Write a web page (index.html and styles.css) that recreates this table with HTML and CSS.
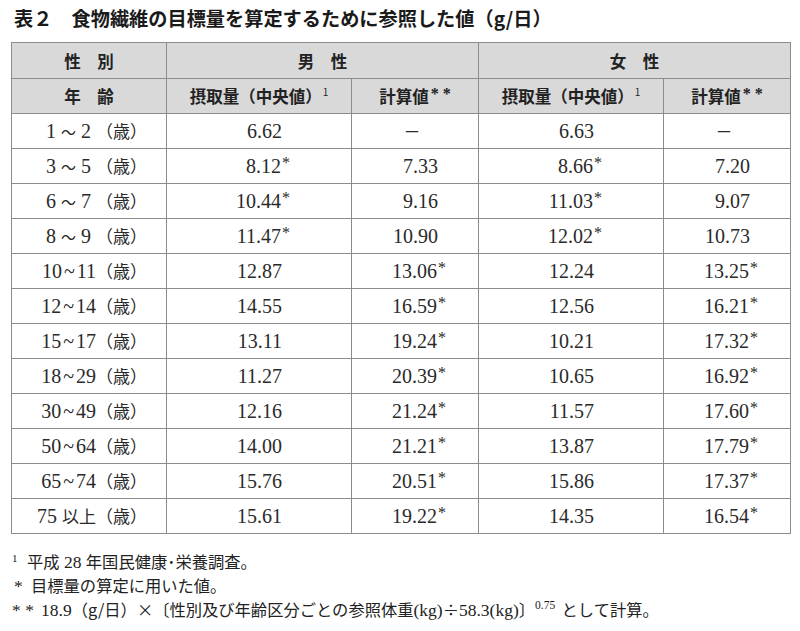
FILE: index.html
```html
<!DOCTYPE html>
<html lang="ja">
<head>
<meta charset="utf-8">
<link rel="stylesheet" href="styles.css">
</head>
<body>
<h1 class="title">表２　食物繊維の目標量を算定するために参照した値（g/日）</h1>
<table class="tbl">
  <colgroup>
    <col class="c-age"><col class="c-wide"><col class="c-narrow"><col class="c-wide"><col class="c-narrow">
  </colgroup>
  <thead>
    <tr class="hr1"><th>性　別</th><th colspan="2">男　性</th><th colspan="2">女　性</th></tr>
    <tr class="hr2"><th>年　齢</th><th>摂取量（中央値）<sup class="hs">1</sup></th><th>計算値<sup class="hs ha">* *</sup></th><th>摂取量（中央値）<sup class="hs">1</sup></th><th>計算値<sup class="hs ha">* *</sup></th></tr>
  </thead>
  <tbody>
    <tr><td class="age">1 <span class="w">～</span> 2 <span class="j">（歳）</span></td><td class="v vw">6.62</td><td class="v dash">－</td><td class="v vw">6.63</td><td class="v dash">－</td></tr>
    <tr><td class="age">3 <span class="w">～</span> 5 <span class="j">（歳）</span></td><td class="v vw">8.12<span class="ast">*</span></td><td class="v vn">7.33</td><td class="v vw">8.66<span class="ast">*</span></td><td class="v vn">7.20</td></tr>
    <tr><td class="age">6 <span class="w">～</span> 7 <span class="j">（歳）</span></td><td class="v vw">10.44<span class="ast">*</span></td><td class="v vn">9.16</td><td class="v vw">11.03<span class="ast">*</span></td><td class="v vn">9.07</td></tr>
    <tr><td class="age">8 <span class="w">～</span> 9 <span class="j">（歳）</span></td><td class="v vw">11.47<span class="ast">*</span></td><td class="v vn">10.90</td><td class="v vw">12.02<span class="ast">*</span></td><td class="v vn">10.73</td></tr>
    <tr><td class="age">10<span class="t">~</span>11<span class="j">（歳）</span></td><td class="v vw">12.87</td><td class="v vn">13.06<span class="ast">*</span></td><td class="v vw">12.24</td><td class="v vn">13.25<span class="ast">*</span></td></tr>
    <tr><td class="age">12<span class="t">~</span>14<span class="j">（歳）</span></td><td class="v vw">14.55</td><td class="v vn">16.59<span class="ast">*</span></td><td class="v vw">12.56</td><td class="v vn">16.21<span class="ast">*</span></td></tr>
    <tr><td class="age">15<span class="t">~</span>17<span class="j">（歳）</span></td><td class="v vw">13.11</td><td class="v vn">19.24<span class="ast">*</span></td><td class="v vw">10.21</td><td class="v vn">17.32<span class="ast">*</span></td></tr>
    <tr><td class="age">18<span class="t">~</span>29<span class="j">（歳）</span></td><td class="v vw">11.27</td><td class="v vn">20.39<span class="ast">*</span></td><td class="v vw">10.65</td><td class="v vn">16.92<span class="ast">*</span></td></tr>
    <tr><td class="age">30<span class="t">~</span>49<span class="j">（歳）</span></td><td class="v vw">12.16</td><td class="v vn">21.24<span class="ast">*</span></td><td class="v vw">11.57</td><td class="v vn">17.60<span class="ast">*</span></td></tr>
    <tr><td class="age">50<span class="t">~</span>64<span class="j">（歳）</span></td><td class="v vw">14.00</td><td class="v vn">21.21<span class="ast">*</span></td><td class="v vw">13.87</td><td class="v vn">17.79<span class="ast">*</span></td></tr>
    <tr><td class="age">65<span class="t">~</span>74<span class="j">（歳）</span></td><td class="v vw">15.76</td><td class="v vn">20.51<span class="ast">*</span></td><td class="v vw">15.86</td><td class="v vn">17.37<span class="ast">*</span></td></tr>
    <tr><td class="age">75 <span class="j">以上（歳）</span></td><td class="v vw">15.61</td><td class="v vn">19.22<span class="ast">*</span></td><td class="v vw">14.35</td><td class="v vn">16.54<span class="ast">*</span></td></tr>
  </tbody>
</table>
<div class="notes">
  <p class="note"><sup class="mk1">1</sup><span class="jt">平成</span> 28 <span class="jt">年国民健康･栄養調査。</span></p>
  <p class="note"><span class="mk2">*</span><span class="jt">目標量の算定に用いた値。</span></p>
  <p class="note"><span class="mk3">* *</span>18.9<span class="jt">（g/日）×〔性別及び年齢区分ごとの参照体重</span>(kg)<span class="jt">÷</span>58.3(kg)<span class="jt">〕</span><sup class="exp">0.75</sup> <span class="jt">として計算。</span></p>
</div>
</body>
</html>
```

FILE: styles.css
```css
html, body {
  margin: 0;
  padding: 0;
  background: #ffffff;
}

body {
  color: #222222;
  font-family: "Noto Sans CJK JP", "Noto Sans", sans-serif;
}

.title {
  margin: 0 0 0 14px;
  padding-top: 8px;
  font-size: 19.2px;
  line-height: 20px;
  font-weight: 700;
  color: #1a1a1a;
}

.tbl {
  margin: 14px 0 0 11px;
  width: 778px;
  border-collapse: collapse;
  table-layout: fixed;
}

.c-age { width: 155px; }
.c-wide { width: 185px; }
.c-narrow { width: 127px; }

.tbl th,
.tbl td {
  border: 1px solid #8c8c8c;
  padding: 0;
}

.tbl th {
  background: #d9d9d9;
  font-family: "Noto Sans CJK JP", sans-serif;
  font-weight: 700;
  font-size: 16.5px;
  color: #222222;
  text-align: center;
}

.hr1 { height: 36px; }
.hr2 { height: 35px; }
.tbl tbody tr { height: 35px; }

.hs {
  font-size: 10px;
  font-weight: 400;
  vertical-align: 7px;
  line-height: 0;
  margin-left: 1px;
}

.hs.ha {
  font-family: "Liberation Serif", serif;
  font-size: 16px;
  font-weight: 700;
  vertical-align: 4px;
  margin-left: 2px;
}

.tbl td {
  font-family: "Liberation Serif", "Noto Sans CJK JP", serif;
  font-size: 20px;
  color: #2a2a2a;
  line-height: 24px;
}

.age {
  text-align: right;
  padding-right: 19px !important;
}

.age .w {
  font-family: "Noto Sans CJK JP", sans-serif;
  font-size: 15px;
}

.age .t {
  display: inline-block;
  margin: 0 2px;
}

.age .j {
  font-family: "Noto Sans CJK JP", sans-serif;
  font-size: 17px;
  font-weight: 400;
}

.v { text-align: right; }
.vw { padding-right: 69px !important; }
.vn { padding-right: 40px !important; }

.dash {
  text-align: center;
  padding-right: 6px !important;
  font-family: "Noto Sans CJK JP", sans-serif !important;
  font-size: 17px !important;
}

.ast {
  display: inline-block;
  width: 0;
  font-size: 16px;
  vertical-align: 5px;
  line-height: 0;
  margin-left: 1px;
}

.notes {
  margin-top: 15px;
  font-family: "Liberation Serif", "Noto Sans CJK JP", serif;
  font-size: 17.5px;
  color: #222222;
}

.note {
  margin: 0;
  height: 24px;
  line-height: 24px;
  white-space: nowrap;
}

.jt {
  font-family: "Noto Sans CJK JP", sans-serif;
  font-size: 16.3px;
  font-weight: 400;
}

.mk1 {
  display: inline-block;
  width: 15px;
  margin-left: 12px;
  font-size: 11px;
  vertical-align: 6px;
  line-height: 0;
}

.mk2 {
  display: inline-block;
  width: 17px;
  margin-left: 14px;
}

.mk3 {
  display: inline-block;
  width: 29px;
  margin-left: 12px;
}

.exp {
  font-size: 11.5px;
  vertical-align: 7px;
  line-height: 0;
  margin-right: 2px;
}
```
